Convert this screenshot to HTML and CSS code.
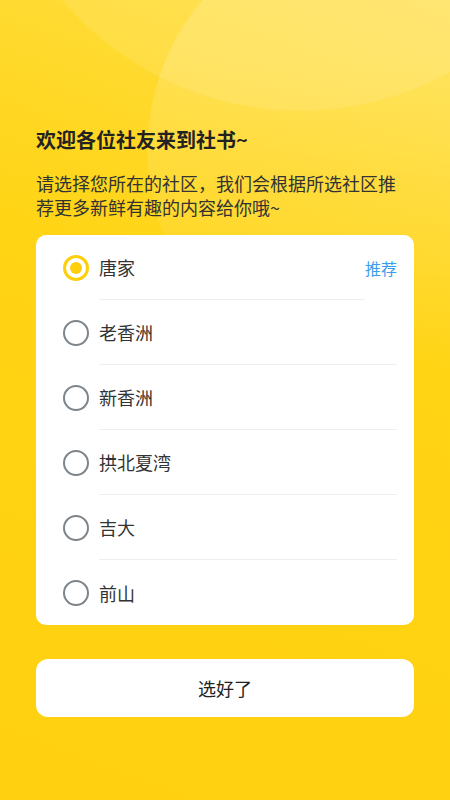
FILE: index.html
```html
<!DOCTYPE html>
<html lang="zh-CN">
<head>
  <meta charset="UTF-8">
  <title>选择社区</title>
  <link rel="stylesheet" href="styles.css">
</head>
<body>

  <h1 class="title">欢迎各位社友来到社书~</h1>
  <p class="subtitle">请选择您所在的社区，我们会根据所选社区推荐更多新鲜有趣的内容给你哦~</p>

  <div class="community-card">
    <div class="row">
      <span class="radio checked"></span>
      <span class="label">唐家</span>
      <span class="tag">推荐</span>
    </div>
    <div class="row">
      <span class="radio"></span>
      <span class="label">老香洲</span>
    </div>
    <div class="row">
      <span class="radio"></span>
      <span class="label">新香洲</span>
    </div>
    <div class="row">
      <span class="radio"></span>
      <span class="label">拱北夏湾</span>
    </div>
    <div class="row">
      <span class="radio"></span>
      <span class="label">吉大</span>
    </div>
    <div class="row">
      <span class="radio"></span>
      <span class="label">前山</span>
    </div>
  </div>

  <button class="confirm-btn">选好了</button>

</body>
</html>
```

FILE: styles.css
```css
html {
  min-height: 800px;
  background:
    radial-gradient(circle at 300px -200px, rgba(255, 255, 255, 0.1) 310px, transparent 311px),
    linear-gradient(200deg, #ffdf45 0%, #ffd414 40%, #ffd00f 100%);
  background-color: #ffd10f;
}

body {
  margin: 0;
  padding: 126px 36px 0;
  font-family: "Noto Sans CJK SC", "Noto Sans", sans-serif;
  color: #333;
}

/* soft light circle in the top right corner, fading out downwards */
body::before {
  content: "";
  position: absolute;
  z-index: -1;
  left: 0;
  top: 0;
  width: 450px;
  height: 420px;
  background: radial-gradient(circle at 380px 150px, rgba(255, 255, 255, 0.16) 232px, transparent 233px);
  -webkit-mask-image: linear-gradient(180deg, #000 15%, transparent 88%);
  mask-image: linear-gradient(180deg, #000 15%, transparent 88%);
}

.title {
  margin: 0;
  font-size: 20px;
  line-height: 28px;
  font-weight: 700;
  color: #222;
}

.subtitle {
  margin: 17px 0 16px;
  max-width: 368px;
  font-size: 18px;
  line-height: 24px;
  color: #333;
}

.community-card {
  background: white;
  border-radius: 10px;
  padding: 0 17px 0 27px;
}

.row {
  display: flex;
  align-items: center;
  height: 65px;
}

.radio {
  width: 26px;
  height: 26px;
  box-sizing: border-box;
  border: 2px solid #7d848a;
  border-radius: 50%;
  margin-right: 10px;
  flex-shrink: 0;
  display: flex;
  align-items: center;
  justify-content: center;
}

.radio.checked {
  border: 3px solid #ffcf0a;
}

.radio.checked::after {
  content: "";
  width: 12px;
  height: 12px;
  border-radius: 50%;
  background: #ffcf0a;
}

.label {
  flex: 1;
  align-self: stretch;
  display: flex;
  align-items: center;
  font-size: 18px;
  color: #333;
  border-bottom: 1px solid #eeeeee;
}

.row:last-child .label {
  border-bottom: none;
}

.tag {
  font-size: 16px;
  color: #3d9be9;
}

.confirm-btn {
  display: block;
  width: 100%;
  height: 58px;
  margin-top: 34px;
  border: none;
  border-radius: 12px;
  background: white;
  font-family: inherit;
  font-size: 18px;
  color: #222;
}
```
